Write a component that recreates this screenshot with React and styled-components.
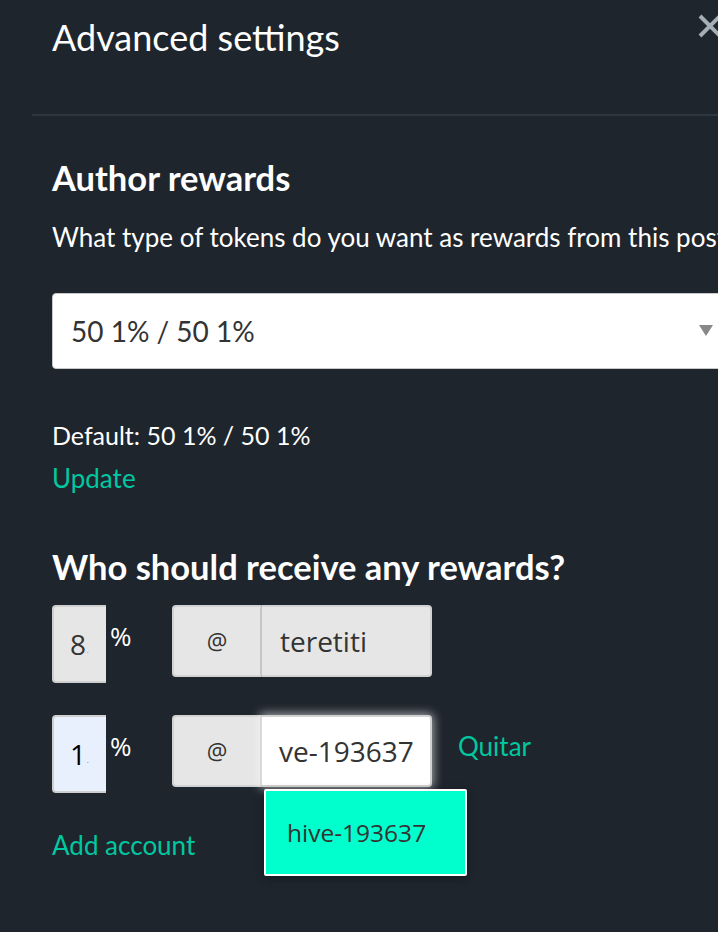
import React from "react";
import styled, { createGlobalStyle } from "styled-components";

const GlobalStyle = createGlobalStyle`
  html, body {
    margin: 0;
    padding: 0;
    background: #1e252d;
  }
  body {
    font-family: Lato, "Open Sans", sans-serif;
    color: #ffffff;
  }
`;

const green = "#00c8a0";

const Modal = styled.div`
  width: 100%;
  min-height: 100vh;
  box-sizing: border-box;
  padding-left: 32px;
  overflow: hidden;
`;

const Header = styled.header`
  height: 114px;
  border-bottom: 2px solid #2c3741;
  position: relative;
`;

const Title = styled.h2`
  margin: 0;
  padding: 16px 0 0 20px;
  font-size: 36px;
  font-weight: 400;
  line-height: 42px;
  white-space: nowrap;
`;

const Close = styled.span`
  position: absolute;
  left: 665px;
  top: 13px;
  width: 26px;
  height: 26px;
`;

const Body = styled.section`
  padding: 42px 0 0 20px;
`;

const SectionTitle = styled.h3`
  margin: 0;
  margin-top: ${(p) => p.mt || 0}px;
  font-size: 34.5px;
  font-weight: 700;
  line-height: 40px;
  white-space: nowrap;
`;

const Text = styled.p`
  margin: 0;
  margin-top: ${(p) => p.mt || 0}px;
  font-size: ${(p) => p.size || 25}px;
  line-height: 32px;
  color: ${(p) => (p.link ? green : "#ffffff")};
  white-space: nowrap;
`;

const Select = styled.div`
  margin-top: 40px;
  width: 720px;
  height: 76px;
  box-sizing: border-box;
  background: #fff;
  border: 1px solid #c8c8c8;
  border-radius: 4px;
  display: flex;
  align-items: center;
  padding-left: 18px;
  font-size: 28px;
  color: #333;
  position: relative;
`;

const Arrow = styled.span`
  position: absolute;
  left: 646px;
  top: 31px;
  width: 0;
  height: 0;
  border-left: 7.5px solid transparent;
  border-right: 7.5px solid transparent;
  border-top: 11px solid #888;
`;

const Row = styled.div`
  display: flex;
  align-items: flex-start;
  margin-top: ${(p) => p.mt}px;
`;

const Percent = styled.div`
  width: 54px;
  height: 78px;
  box-sizing: border-box;
  border: 2px solid #cfcfcf;
  border-right: none;
  border-radius: 4px 0 0 4px;
  background: ${(p) => (p.autofill ? "#e8f0fe" : "#e6e6e6")};
  display: flex;
  align-items: center;
  padding-left: 16px;
  font-family: "Open Sans", sans-serif;
  font-size: 28px;
  color: ${(p) => (p.autofill ? "#000" : "#333")};
`;

const Dot = styled.span`
  font-size: 6px;
  margin-left: 1px;
  margin-top: 14px;
`;

const Sign = styled.span`
  margin-left: 4px;
  margin-top: 16px;
  font-size: 26px;
  line-height: 30px;
  font-family: "Open Sans", sans-serif;
  width: 62px;
`;

const Group = styled.div`
  display: flex;
  height: 72px;
  position: relative;
`;

const At = styled.div`
  width: 90px;
  box-sizing: border-box;
  background: #e6e6e6;
  border: 2px solid #d2d2d2;
  border-right: 2px solid #c6c6c6;
  border-radius: 4px 0 0 4px;
  display: flex;
  align-items: center;
  justify-content: center;
  font-family: "Open Sans", sans-serif;
  font-size: 23px;
  color: #333;
`;

const Input = styled.div`
  width: 170px;
  box-sizing: border-box;
  background: ${(p) => (p.focus ? "#fff" : "#e6e6e6")};
  border: 2px solid #d2d2d2;
  border-left: none;
  border-radius: 0 4px 4px 0;
  display: flex;
  align-items: center;
  padding-left: ${(p) => (p.focus ? 17 : 18)}px;
  font-family: "Open Sans", sans-serif;
  font-size: 28px;
  color: #333;
  box-shadow: ${(p) =>
    p.focus ? "0 0 10px 2px rgba(255,255,255,0.55)" : "none"};
  overflow: hidden;
  white-space: nowrap;
`;

const Remove = styled.span`
  margin-left: 26px;
  margin-top: 15px;
  font-size: 26px;
  line-height: 32px;
  color: ${green};
`;

const Menu = styled.div`
  position: absolute;
  left: 92px;
  top: 74px;
  width: 203px;
  height: 87px;
  box-sizing: border-box;
  background: #00ffcc;
  border: 2px solid #fff;
  border-radius: 2px;
  box-shadow: 0 2px 8px rgba(0, 0, 0, 0.35);
  display: flex;
  align-items: center;
  padding-left: 21px;
  font-family: "Open Sans", sans-serif;
  font-size: 24.5px;
  color: #333;
  z-index: 2;
`;

export default function App() {
  return (
    <>
      <GlobalStyle />
      <Modal>
        <Header>
          <Title>Advanced settings</Title>
          <Close>
            <svg width="26" height="26" viewBox="0 0 26 26">
              <path
                d="M3 3 L23 23 M23 3 L3 23"
                stroke="#a5aeb4"
                strokeWidth="4"
              />
            </svg>
          </Close>
        </Header>
        <Body>
          <SectionTitle>Author rewards</SectionTitle>
          <Text size={26} mt={23}>
            What type of tokens do you want as rewards from this post?
          </Text>
          <Select>
            50 1% / 50 1%
            <Arrow />
          </Select>
          <Text mt={50}>Default: 50 1% / 50 1%</Text>
          <Text link size={26} mt={11}>
            Update
          </Text>
          <SectionTitle mt={53}>Who should receive any rewards?</SectionTitle>
          <Row mt={18}>
            <Percent>
              8<Dot>.</Dot>
            </Percent>
            <Sign>%</Sign>
            <Group>
              <At>@</At>
              <Input>teretiti</Input>
            </Group>
          </Row>
          <Row mt={32}>
            <Percent autofill>
              1<Dot>.</Dot>
            </Percent>
            <Sign>%</Sign>
            <Group>
              <At>@</At>
              <Input focus>ve-193637</Input>
              <Menu>hive-193637</Menu>
            </Group>
            <Remove>Quitar</Remove>
          </Row>
          <Text link size={26} mt={36}>
            Add account
          </Text>
        </Body>
      </Modal>
    </>
  );
}
